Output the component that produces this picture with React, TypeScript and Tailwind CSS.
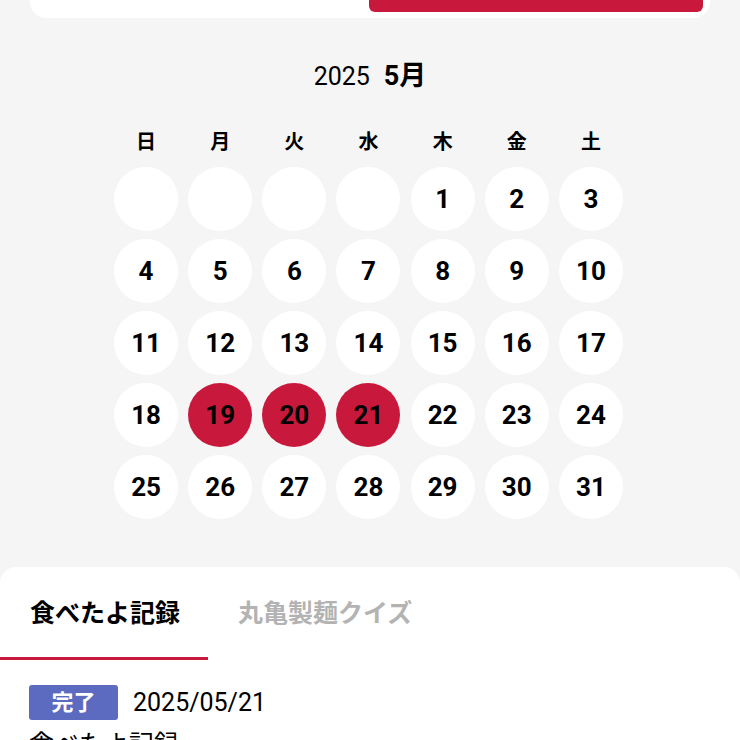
const WEEKDAYS = ["日", "月", "火", "水", "木", "金", "土"];
const SELECTED = [19, 20, 21];

// May 2025 starts on Thursday
const DAYS: (number | null)[] = [
  null,
  null,
  null,
  null,
  ...Array.from({ length: 31 }, (_, i) => i + 1),
];

export default function App() {
  return (
    <div className="min-h-screen overflow-hidden bg-[#f5f5f5] font-['Roboto','Noto_Sans_CJK_JP',sans-serif] text-black">
      {/* Top card (scrolled mostly out of view) */}
      <div className="mx-[30px] mt-[-62px] flex h-[80px] justify-end rounded-2xl bg-white pr-[7px] pb-[6px]">
        <button className="h-[56px] w-[334px] self-end rounded-md bg-[#c8193c] text-lg font-bold text-white">
          記録する
        </button>
      </div>

      {/* Month title */}
      <div className="mt-[44px] flex items-baseline justify-center gap-[14px]">
        <span className="text-[25px] leading-[28px]">2025</span>
        <span className="text-[27px] leading-[28px] font-bold">5月</span>
      </div>

      {/* Calendar */}
      <div className="mt-[38px] ml-[109px] w-[519px]">
        <div className="grid grid-cols-7">
          {WEEKDAYS.map((w) => (
            <div key={w} className="text-center text-[20px] leading-[26px] font-bold">
              {w}
            </div>
          ))}
        </div>
        <div className="mt-[12px] grid grid-cols-7 gap-y-[8px]">
          {DAYS.map((d, i) => (
            <div key={i} className="flex justify-center">
              <div
                className={`flex h-[64px] w-[64px] items-center justify-center rounded-full text-[26px] font-bold ${
                  d !== null && SELECTED.includes(d) ? "bg-[#c8193c]" : "bg-white"
                }`}
              >
                {d}
              </div>
            </div>
          ))}
        </div>
      </div>

      {/* Bottom panel */}
      <div className="mt-[48px] rounded-t-2xl bg-white">
        <div className="flex">
          <button className="relative h-[93px] pr-[28px] pl-[30px] text-[25px] font-bold">
            食べたよ記録
            <span className="absolute right-0 bottom-0 left-0 h-[3px] bg-[#c8193c]" />
          </button>
          <button className="h-[93px] pl-[30px] text-[25px] font-bold text-[#b3b3b3]">
            丸亀製麺クイズ
          </button>
        </div>
        <div className="px-[29px] pt-[24px]">
          <div className="flex items-center">
            <span className="flex h-[35px] w-[89px] items-center justify-center rounded-[3px] bg-[#5c6bc0] text-[22px] font-bold text-white">
              完了
            </span>
            <span className="ml-[15px] text-[25px]">2025/05/21</span>
          </div>
          <p className="mt-[4px] text-[25px]">食べたよ記録</p>
        </div>
      </div>
    </div>
  );
}
